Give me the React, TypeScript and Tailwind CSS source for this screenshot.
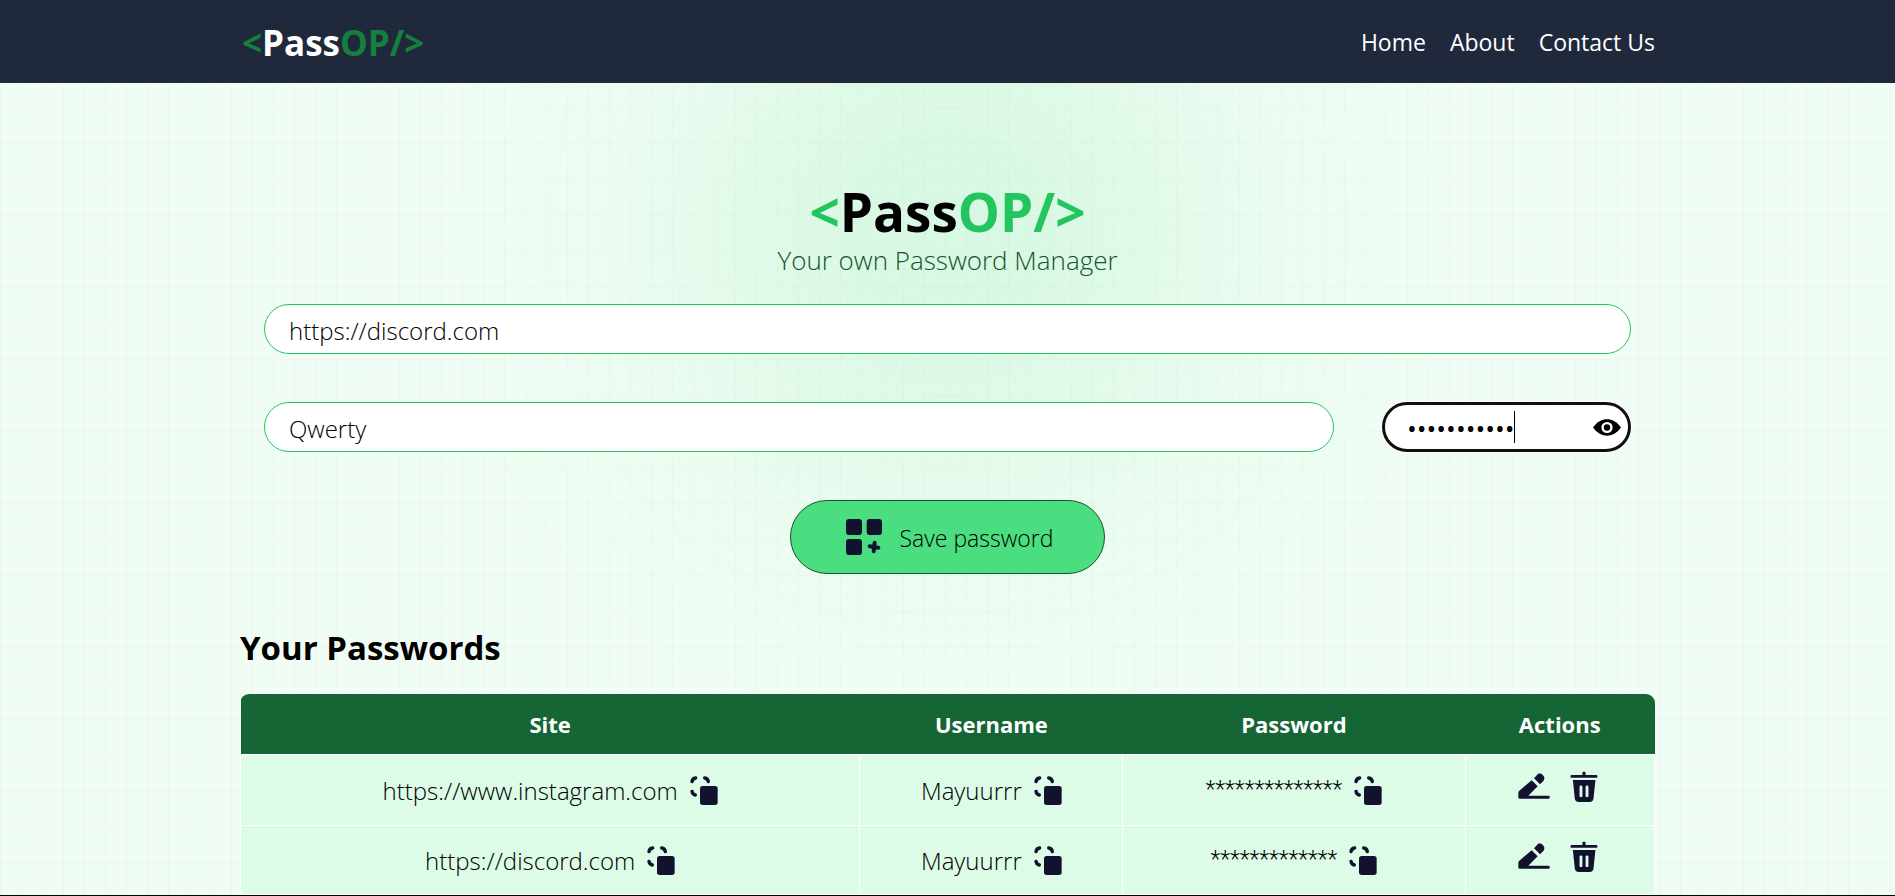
import { useState } from "react";

const INK = "#12122f";

function CopyIcon() {
  return (
    <svg viewBox="0 0 84 90" className="h-[30px] w-7" fill="none" aria-hidden="true">
      <path d="M6 17C7 10 10 7 17 6M44 6C51 7 54 10 55 17M6 46C7 53 10 56 16 57" stroke={INK} strokeWidth="10" strokeLinecap="round" />
      <rect x="30" y="30" width="53" height="57" rx="8" fill={INK} />
    </svg>
  );
}

function EditIcon() {
  return (
    <svg viewBox="0 0 96 96" className="h-8 w-8" fill={INK} aria-hidden="true">
      <path d="M1 66C1 63 2 61 4 59L41 28L59 46L31 74H91C97 74 97 83 91 83H5C2 83 1 82 1 79Z" />
      <path d="M48 22L57 12C62 6 69 7 74 12C80 17 81 24 76 30L66 40Z" />
    </svg>
  );
}

function TrashIcon() {
  return (
    <svg viewBox="0 0 88 98" className="h-8 w-7" fill={INK} aria-hidden="true">
      <path d="M39 11V5C39 0 49 0 49 5V11H82C88 11 88 20 82 20H6C0 20 0 11 6 11Z" />
      <path
        fillRule="evenodd"
        d="M9 27H80L74 84C73 92 69 96 61 96H28C20 96 16 92 15 84ZM30 48V77C30 82 39 82 39 77V48C39 43 30 43 30 48ZM49 48V77C49 82 58 82 58 77V48C58 43 49 43 49 48Z"
      />
    </svg>
  );
}

function GridPlusIcon() {
  return (
    <svg viewBox="0 0 108 108" className="h-9 w-9" fill={INK} aria-hidden="true">
      <rect width="48" height="48" rx="9" />
      <rect x="62" width="46" height="48" rx="9" />
      <rect y="60" width="48" height="48" rx="9" />
      <path d="M86 71L83 97M71 82L97 86" stroke={INK} strokeWidth="12" strokeLinecap="round" />
    </svg>
  );
}

function EyeIcon() {
  return (
    <svg viewBox="0 0 82 50" className="h-[17px] w-7" aria-hidden="true">
      <path d="M0 25C12 8 26 1 41 1S70 8 82 25C70 42 56 49 41 49S12 42 0 25Z" fill="#000" />
      <circle cx="41" cy="25" r="13" fill="none" stroke="#fff" strokeWidth="7" />
    </svg>
  );
}

function Logo({ accent }: { accent: string }) {
  return (
    <>
      <span className={accent}>&lt;</span>Pass<span className={accent}>OP/&gt;</span>
    </>
  );
}

const entries = [
  { site: "https://www.instagram.com", username: "Mayuurrr", mask: "**************" },
  { site: "https://discord.com", username: "Mayuurrr", mask: "*************" },
];

const cell = "border border-white p-0";
const cellRow = "flex items-center justify-center gap-3 pt-0.5";
const field = "h-[50px] w-full rounded-full bg-white pt-0.5 text-black";
const textField = "border border-[#22c55e] px-6 text-2xl font-light";

export default function App() {
  const [site, setSite] = useState("https://discord.com");
  const [username, setUsername] = useState("Qwerty");
  const [password, setPassword] = useState("abcdefghijk");
  const [visible, setVisible] = useState(false);

  return (
    <div className="relative isolate flex min-h-screen flex-col overflow-hidden bg-green-50 font-['Open_Sans','Noto_Sans',sans-serif] text-[23px] leading-9 text-black">
      <div className="absolute inset-0 -z-10 bg-[linear-gradient(to_right,#8080800a_1px,transparent_1px),linear-gradient(to_bottom,#8080800a_1px,transparent_1px)] bg-[size:21px_36px] bg-[position:0_-1px]" />
      <div className="absolute inset-x-0 top-0 -z-10 mx-auto size-[465px] rounded-full bg-[#4ade80] opacity-20 blur-[150px]" />

      <header className="bg-[#1f293b] text-white">
        <div className="mx-auto flex h-[83px] max-w-[1415px] items-center justify-between">
          <a href="#home" className="pl-0.5 pt-0.5 text-[35px] font-bold">
            <Logo accent="text-[#15803d]" />
          </a>
          <nav className="flex gap-6">
            <a href="#home">Home</a>
            <a href="#about">About</a>
            <a href="#contact">Contact Us</a>
          </nav>
        </div>
      </header>

      <main className="mx-auto w-full max-w-[1415px] pt-[102px]">
        <form className="px-6" onSubmit={(e) => e.preventDefault()}>
          <h1 className="text-center text-[53px] font-bold leading-[54px]">
            <Logo accent="text-[#22c55e]" />
          </h1>
          <p className="text-center text-[26px] font-light leading-[42px] text-[#14532d]">Your own Password Manager</p>

          <div className="mt-[23px] flex flex-col gap-12">
            <input
              aria-label="Website URL"
              value={site}
              onChange={(e) => setSite(e.target.value)}
              className={`${field} ${textField}`}
            />
            <div className="flex gap-12">
              <input
                aria-label="Username"
                value={username}
                onChange={(e) => setUsername(e.target.value)}
                className={`${field} ${textField}`}
              />
              <div className="relative w-[249px] shrink-0">
                <input
                  aria-label="Password"
                  type={visible ? "text" : "password"}
                  value={password}
                  onChange={(e) => setPassword(e.target.value)}
                  className={`${field} border-[3px] border-[#101010] px-[22px] text-[26px] caret-transparent ring-1 ring-white outline-none`}
                />
                <span className="absolute left-[132px] top-[9px] h-8 w-px bg-black" />
                <button
                  type="button"
                  aria-label="Show password"
                  onClick={() => setVisible(!visible)}
                  className="absolute inset-y-0 right-[10px] flex items-center"
                >
                  <EyeIcon />
                </button>
              </div>
            </div>
            <button
              type="submit"
              className="flex h-[74px] w-[315px] items-center justify-center gap-[18px] self-center rounded-full border border-[#14532d] bg-[#4ade80] pl-1 font-light"
            >
              <GridPlusIcon />
              <span className="pt-0.5">Save password</span>
            </button>
          </div>
        </form>

        <h2 className="mt-[54px] text-[33px] font-bold leading-10">Your Passwords</h2>

        <div className="mt-[26px] overflow-hidden rounded-[9px]">
          <table className="w-full table-fixed border-collapse">
            <colgroup>
              <col className="w-[43.8%]" />
              <col className="w-[18.6%]" />
              <col className="w-[24.2%]" />
              <col className="w-[13.4%]" />
            </colgroup>
            <thead className="bg-[#166534] text-[22px] text-white">
              <tr>
                <th className="h-[60px] p-0 font-bold">Site</th>
                <th className="h-[60px] p-0 font-bold">Username</th>
                <th className="h-[60px] p-0 font-bold">Password</th>
                <th className="h-[60px] p-0 font-bold">Actions</th>
              </tr>
            </thead>
            <tbody className="bg-[#dcfce7] text-2xl font-light">
              {entries.map((entry) => (
                <tr key={entry.site} className="h-[71px] last:h-[69px]">
                  <td className={cell}>
                    <div className={cellRow}>
                      <span>{entry.site}</span>
                      <button type="button" aria-label="Copy site"><CopyIcon /></button>
                    </div>
                  </td>
                  <td className={cell}>
                    <div className={cellRow}>
                      <span>{entry.username}</span>
                      <button type="button" aria-label="Copy username"><CopyIcon /></button>
                    </div>
                  </td>
                  <td className={cell}>
                    <div className={cellRow}>
                      <span className="font-[Roboto,sans-serif] text-[23px]">{entry.mask}</span>
                      <button type="button" aria-label="Copy password"><CopyIcon /></button>
                    </div>
                  </td>
                  <td className={cell}>
                    <div className="flex items-center justify-center gap-5 pb-1.5 pr-1">
                      <button type="button" aria-label="Edit"><EditIcon /></button>
                      <button type="button" aria-label="Delete"><TrashIcon /></button>
                    </div>
                  </td>
                </tr>
              ))}
            </tbody>
          </table>
        </div>
      </main>
      <footer className="mt-auto h-px bg-black" />
    </div>
  );
}
